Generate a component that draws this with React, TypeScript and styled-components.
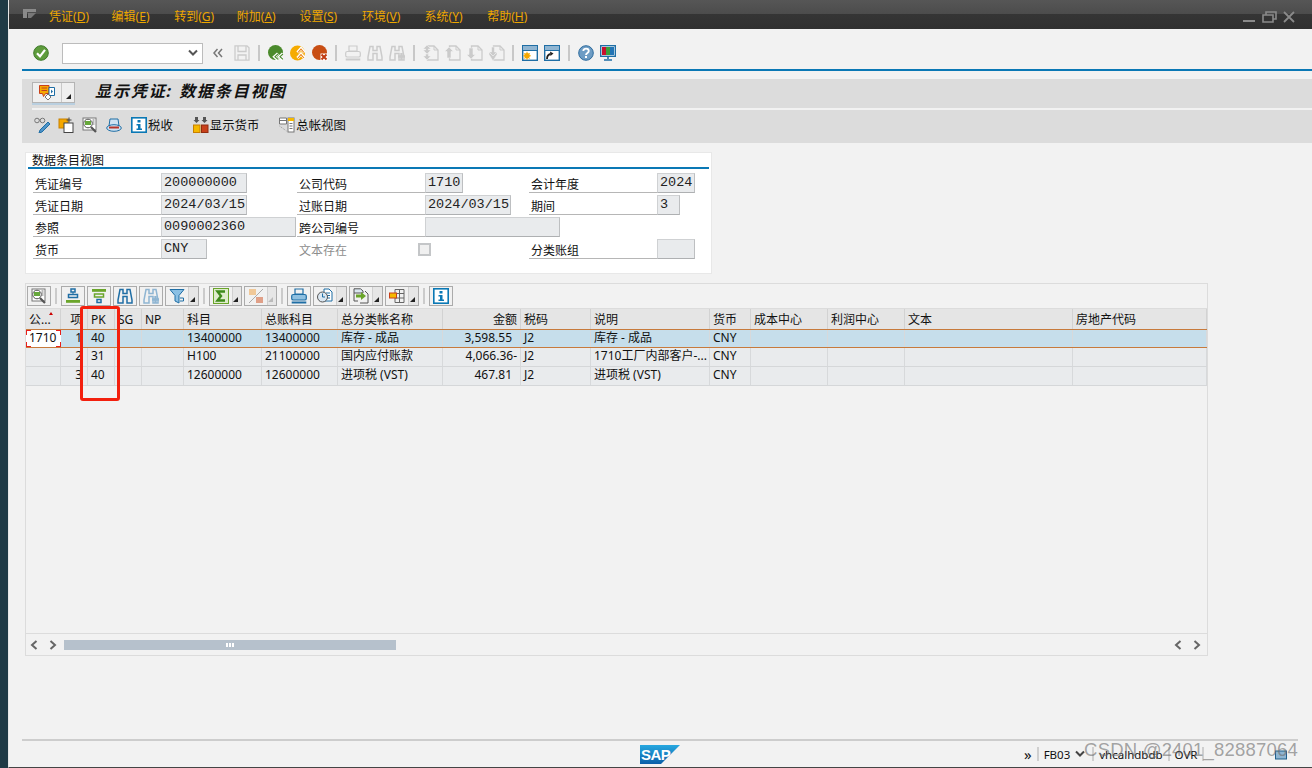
import React from 'react';
import styled, { createGlobalStyle } from 'styled-components';

const GlobalStyle = createGlobalStyle`
  html, body {
    margin: 0;
    width: 1312px;
    height: 768px;
    overflow: hidden;
    background: #f2f2f2;
    font-family: "Noto Sans", "Noto Sans CJK SC", sans-serif;
  }
  #root { width: 1312px; height: 768px; }
`;

const uiFont = `"Noto Sans", "Noto Sans CJK SC", sans-serif`;
const monoFont = `"Liberation Mono", "Noto Sans CJK SC", monospace`;
const GRID_COLS = '35px 27px 27px 27px 42px 78px 76px 105px 78px 70px 119px 41px 77px 77px 168px 1fr';

const Frame = styled.div`
  display: flex;
  width: 1312px;
  height: 768px;
`;

const LeftStrip = styled.div`
  width: 8px;
  background: #1f3a45;
`;

const Main = styled.div`
  position: relative;
  flex: 1;
  display: flex;
  flex-direction: column;
  box-sizing: border-box;
  background: #f2f2f2;
  border-left: 1px solid #e6e6e6;
  border-bottom: 1px solid #454545;
  overflow: hidden;
  color: #111;
`;

const TitleBar = styled.div`
  display: flex;
  align-items: center;
  height: 29px;
  flex-shrink: 0;
  padding: 0 17px 0 13px;
  background: linear-gradient(#565656 0, #4c4c4c 14px, #353535 14px, #303030 100%);
`;

const Menu = styled.div`
  display: flex;
  margin-left: 12px;
  flex: 1;
  padding-top: 3px;
`;

const MenuItem = styled.span`
  width: 62.6px;
  font-size: 12px;
  color: #eda600;
  white-space: nowrap;
  u { text-underline-offset: 1px; }
`;

const WinControls = styled.div`
  display: flex;
  align-items: center;
  gap: 6px;
  padding-top: 5px;
`;

const Content = styled.div`
  display: flex;
  flex-direction: column;
  flex: 1;
  padding-left: 13px;
`;

const SysToolbar = styled.div`
  display: flex;
  align-items: center;
  height: 40px;
  gap: 6px;
  padding: 8px 0 0 11px;
  box-sizing: border-box;
`;

const Combo = styled.div`
  display: flex;
  align-items: center;
  justify-content: flex-end;
  box-sizing: border-box;
  width: 141px;
  height: 21px;
  margin: 0 4px 0 7px;
  padding-right: 4px;
  background: #fff;
  border: 1px solid #bcbcbc;
`;

const Collapse = styled.span`
  margin-right: 5px;
`;

const ToolSep = styled.span`
  width: 2px;
  height: 16px;
  margin: 0 1.75px;
  background: #c8c8c8;
`;

const BlueRule = styled.div`
  height: 2px;
  background: #0a78b5;
  flex-shrink: 0;
  margin-bottom: 8px;
`;

const TitleRow = styled.div`
  display: flex;
  align-items: flex-start;
  height: 29px;
  box-sizing: border-box;
  padding: 3px 0 0 10px;
  background: #dcdcdc;
  flex-shrink: 0;
`;

const TitleRule = styled.div`
  height: 2px;
  padding-left: 10px;
  background: #dcdcdc;
  &::before {
    content: '';
    display: block;
    height: 2px;
    background: #f2f2f2;
  }
`;

const SplitBtn = styled.div`
  display: flex;
  box-sizing: border-box;
  width: 43px;
  height: 21px;
  background: #efefef;
  border: 1px solid #b4b4b4;
  box-shadow: 0 2px 0 #b9cfe0;
`;

const SplitMain = styled.div`
  display: flex;
  align-items: center;
  justify-content: center;
  width: 28px;
  border-right: 1px solid #c8c8c8;
`;

const SplitArrow = styled.div<{ $off?: boolean }>`
  flex: 1;
  position: relative;
  &::after {
    content: '';
    position: absolute;
    right: 3px;
    bottom: 3px;
    border-style: solid;
    border-width: 0 0 5px 5px;
    border-color: transparent transparent ${(p) => (p.$off ? '#bbb' : '#222')} transparent;
  }
`;

const ScreenTitle = styled.h1`
  margin: 0 0 0 20px;
  font-size: 16px;
  line-height: 18px;
  font-weight: 700;
  font-style: italic;
  letter-spacing: 1.9px;
  color: #111;
  font-family: ${uiFont};
`;

const AppToolbar = styled.div`
  display: flex;
  align-items: center;
  height: 33px;
  box-sizing: border-box;
  padding: 0 0 3px 12px;
  gap: 8px;
  background: #dcdcdc;
  flex-shrink: 0;
`;

const AppButton = styled.span<{ $gap?: number }>`
  display: inline-flex;
  align-items: center;
  gap: 1px;
  margin-left: ${(p) => p.$gap || 0}px;
  font-size: 12.4px;
  white-space: nowrap;
  color: #111;
`;

const Panel = styled.section`
  box-sizing: border-box;
  width: 687px;
  height: 122px;
  margin: 9px 0 0 3px;
  padding: 0 2px;
  background: #fff;
  border: 1px solid #e8e8e8;
`;

const PanelTitle = styled.div`
  box-sizing: border-box;
  height: 16px;
  padding-left: 4px;
  font-size: 12px;
  line-height: 15px;
  border-bottom: 2px solid #0a78b5;
`;

const FormRows = styled.div`
  display: flex;
  flex-direction: column;
  gap: 2px;
  margin-top: 4px;
  padding-left: 5px;
`;

const FormRow = styled.div`
  display: grid;
  grid-template-columns: 264px 232px 1fr;
  height: 20px;
`;

const FieldGroup = styled.div`
  display: flex;
  align-items: stretch;
`;

const Label = styled.label<{ $off?: boolean }>`
  box-sizing: border-box;
  flex-shrink: 0;
  width: 128px;
  padding: 4px 0 0 2px;
  font-size: 12px;
  line-height: 15px;
  color: ${(p) => (p.$off ? '#8d8d8d' : '#111')};
  border-bottom: 1px solid ${(p) => (p.$off ? 'transparent' : '#b6b6b6')};
  white-space: nowrap;
`;

const Field = styled.div<{ $w: number }>`
  box-sizing: border-box;
  flex-shrink: 0;
  width: ${(p) => p.$w}px;
  padding-left: 2px;
  background: #e9ebed;
  border: 1px solid #cfd1d3;
  border-bottom: 1px solid #aeb0b2;
  border-right-color: #bdbfc1;
  font-family: ${monoFont};
  font-size: 13.5px;
  line-height: 17px;
  color: #222;
  white-space: nowrap;
  overflow: hidden;
`;

const Check = styled.span`
  box-sizing: border-box;
  align-self: center;
  width: 13px;
  height: 13px;
  margin-left: -7px;
  background: #f0f0f0;
  border: 2px solid #c4c6c8;
`;

const TableBox = styled.section`
  position: relative;
  display: flex;
  flex-direction: column;
  box-sizing: border-box;
  width: 1183px;
  height: 373px;
  margin: 9px 0 0 3px;
  border: 1px solid #dcdcdc;
`;

const TableToolbar = styled.div`
  display: flex;
  align-items: center;
  gap: 2px;
  box-sizing: border-box;
  height: 25px;
  padding: 1px 0 1px 1px;
  border-bottom: 1px solid #dcdcdc;
`;

const TblBtn = styled.span<{ $w?: number }>`
  display: flex;
  box-sizing: border-box;
  width: ${(p) => p.$w || 24}px;
  height: 20px;
  background: #f1f1f1;
  border: 1px solid #ababab;
`;

const TblBtnIcon = styled.span`
  display: flex;
  align-items: center;
  justify-content: center;
  width: 22px;
  flex-shrink: 0;
`;

const TblBtnArrow = styled(SplitArrow)`
  border-left: 1px solid #d0d0d0;
  background: #e6e6e6;
`;

const TblSep = styled.span`
  width: 2px;
  height: 16px;
  margin: 0 2px;
  background: #cbcbcb;
`;

const GridHead = styled.div`
  display: grid;
  grid-template-columns: ${GRID_COLS};
  box-sizing: border-box;
  height: 21px;
  background: #e5e5e5;
  border-bottom: 1px solid #c77a3c;
`;

const GridRow = styled.div<{ $selected?: boolean }>`
  display: grid;
  grid-template-columns: ${GRID_COLS};
  box-sizing: border-box;
  height: ${(p) => (p.$selected ? 18 : 19)}px;
  background: ${(p) => (p.$selected ? '#c6deeb' : '#e9ebed')};
  border-bottom: 1px solid ${(p) => (p.$selected ? '#c77a3c' : '#d5d7d9')};
`;

const Cell = styled.div<{ $right?: boolean; $head?: boolean; $pad?: number }>`
  box-sizing: border-box;
  padding: 0 ${(p) => p.$pad ?? 3}px 0 3px;
  font-family: ${uiFont};
  font-size: 12px;
  text-align: ${(p) => (p.$right ? 'right' : 'left')};
  white-space: nowrap;
  overflow: hidden;
  color: #111;
  border-right: 1px solid ${(p) => (p.$head ? '#d2d2d2' : '#d7d9db')};
  line-height: ${(p) => (p.$head ? '22px' : '15px')};
`;

const FocusCell = styled(Cell)`
  background:
    linear-gradient(#e8201a, #e8201a) 0 0 / 5px 1px no-repeat,
    linear-gradient(#e8201a, #e8201a) 0 0 / 1px 5px no-repeat,
    linear-gradient(#e8201a, #e8201a) 100% 0 / 5px 1px no-repeat,
    linear-gradient(#e8201a, #e8201a) 100% 0 / 1px 5px no-repeat,
    linear-gradient(#e8201a, #e8201a) 0 100% / 5px 1px no-repeat,
    linear-gradient(#e8201a, #e8201a) 0 100% / 1px 5px no-repeat,
    linear-gradient(#e8201a, #e8201a) 100% 100% / 5px 1px no-repeat,
    linear-gradient(#e8201a, #e8201a) 100% 100% / 1px 5px no-repeat,
    #fff;
  border-right: 0;
`;

const SortMark = styled.span`
  position: absolute;
  top: 28px;
  left: 23px;
  border-style: solid;
  border-width: 0 2.5px 3px 2.5px;
  border-color: transparent transparent #c00 transparent;
`;

const Trail = styled.span`
  display: inline-block;
  width: 5px;
`;

const Spacer = styled.div`
  flex: 1;
`;

const ScrollBar = styled.div`
  display: flex;
  align-items: center;
  box-sizing: border-box;
  height: 22px;
  padding: 0 6px 0 4px;
  border-top: 1px solid #dcdcdc;
`;

const ScrollArrows = styled.div`
  display: flex;
  gap: 11px;
`;

const Thumb = styled.div`
  display: flex;
  align-items: center;
  justify-content: center;
  gap: 1px;
  width: 332px;
  height: 10px;
  margin: 0 auto 0 7px;
  background: #b6c1cc;
  i { width: 2px; height: 4px; background: #fff; }
`;

const Highlight = styled.div`
  position: absolute;
  left: 54px;
  top: 22px;
  box-sizing: border-box;
  width: 40px;
  height: 95px;
  border: 3px solid #f3200e;
  border-radius: 3px;
`;

const FooterRule = styled.div`
  width: 1276px;
  height: 2px;
  margin-top: auto;
  background: #cdcdcd;
  flex-shrink: 0;
`;

const Footer = styled.footer`
  display: flex;
  align-items: center;
  height: 26px;
  flex-shrink: 0;
`;

const SapLogo = styled.div`
  margin: 0 344px 0 618px;
`;

const StatusItem = styled.span<{ $ml?: number; $big?: boolean }>`
  margin-left: ${(p) => p.$ml || 0}px;
  font-size: ${(p) => (p.$big ? 15 : 11.5)}px;
  color: #111;
  white-space: nowrap;
`;

const StatusSep = styled.span<{ $ml?: number }>`
  width: 2px;
  height: 14px;
  margin-left: ${(p) => p.$ml || 0}px;
  background: #cfcfcf;
`;

const Watermark = styled.div`
  position: absolute;
  right: 14px;
  bottom: 6px;
  font-family: "Liberation Sans", sans-serif;
  font-size: 18.5px;
  letter-spacing: 0.2px;
  color: rgba(110, 110, 110, 0.62);
  white-space: nowrap;
`;

const Svg = styled.svg`
  display: block;
  flex-shrink: 0;
`;

type IcoProps = { c?: string };

const Ico: React.FC<{ w?: number; h?: number; children: React.ReactNode }> = ({ w = 16, h = 16, children }) => (
  <Svg width={w} height={h} viewBox={`0 0 ${w} ${h}`}>
    {children}
  </Svg>
);

const GREY = '#cbcbcb';

const OkIcon = () => (
  <Ico>
    <circle cx="8" cy="8" r="7.3" fill="#5e9c3c" stroke="#3f7a2a" />
    <path d="M4 8.200l3 3.200 5-6.600" fill="none" stroke="#fff" strokeWidth="2.200" />
  </Ico>
);
const BackIcon = () => (
  <Ico>
    <circle cx="7.500" cy="7.500" r="7.500" fill="#4b8a2c" />
    <path d="M10 8.500l-3.500 3.200 3.500 3.200M15 8.500l-3.500 3.200 3.500 3.200" fill="none" stroke="#fff" strokeWidth="3" />
    <path d="M10 9l-3 2.700 3 2.700M15 9l-3 2.700 3 2.700" fill="none" stroke="#4b8a2c" strokeWidth="1.100" />
  </Ico>
);
const ExitIcon = () => (
  <Ico>
    <circle cx="7.500" cy="8" r="7.500" fill="#f6ab00" />
    <path d="M7.500 7.500l3.500-4 3.500 4M7.500 13l3.500-4 3.500 4" fill="none" stroke="#fff" strokeWidth="3" />
    <path d="M8 7.500l3-3.400 3 3.400M8 13l3-3.400 3 3.400" fill="none" stroke="#e8801a" strokeWidth="1.100" />
  </Ico>
);
const CancelIcon = () => (
  <Ico>
    <circle cx="7.500" cy="7.500" r="7.500" fill="#c84e14" />
    <path d="M8.500 8.500h7v7h-7z" fill="#fff" />
    <path d="M9.500 9.500l5 5M14.500 9.500l-5 5" stroke="#c03a10" strokeWidth="2" />
  </Ico>
);
const SaveIcon = () => (
  <Ico>
    <path d="M1 .8h12l2 2v12.400H1z" fill="none" stroke={GREY} strokeWidth="1.300" />
    <path d="M4 1v5.500h8V1M4 15v-5h8v5" fill="none" stroke={GREY} strokeWidth="1.300" />
  </Ico>
);
const PrintIcon = ({ c = '#f2f2f2', d = GREY }: IcoProps & { d?: string }) => (
  <Ico>
    <path d="M4 1h8v5H4z" fill="none" stroke={d} strokeWidth="1.200" />
    <rect x=".7" y="6.500" width="14.600" height="5.500" rx="1.600" fill={c} stroke={d} strokeWidth="1.200" />
    <path d="M.7 14.500h14.600" stroke={d} strokeWidth="2" />
  </Ico>
);
const BinoIcon = ({ c = GREY, plus }: IcoProps & { plus?: boolean }) => (
  <Ico>
    <path d="M3 1.500h3v4h4v-4h3l2 10.500v3h-5V8.500H6V15H1v-3z" fill="none" stroke={c} strokeWidth="1.500" />
    {plus && <path d="M9 11.500h7M12.500 8v7" stroke={c} strokeWidth="2.400" />}
  </Ico>
);
const DocArrow = ({ up = 0, down = 0 }: { up?: number; down?: number }) => (
  <Ico>
    <path d="M4.500 1h6.500l4 4v10H4.500z" fill="none" stroke={GREY} strokeWidth="1.300" />
    <path d="M11 1v4h4" fill="none" stroke={GREY} />
    {up === 2 && <path d="M4 0l4 4H5.500v1H8l-4 4-4-4h2.500V4H0z" fill={GREY} stroke="#f2f2f2" strokeWidth=".6" />}
    {up === 1 && <path d="M4 2l4.500 4.500H6V13H2V6.500H-.5z" fill={GREY} stroke="#f2f2f2" strokeWidth=".6" />}
    {down === 1 && <path d="M2 3h4v6.500h2.500L4 14 -.5 9.500H2z" fill={GREY} stroke="#f2f2f2" strokeWidth=".6" />}
    {down === 2 && <path d="M0 7l4 3.500L8 7v2.500L4 16 0 9.500z" fill={GREY} stroke="#f2f2f2" strokeWidth=".6" />}
    {down === 2 && <path d="M2.500 2h3v5H8l-4 4-4-4h2.500z" fill={GREY} stroke="#f2f2f2" strokeWidth=".6" />}
    {up === 2 && <path d="M2.500 9h3v2H8l-4 4-4-4h2.500z" fill={GREY} stroke="#f2f2f2" strokeWidth=".6" />}
  </Ico>
);
const NewModeIcon = () => (
  <Ico>
    <rect x=".7" y=".7" width="14.600" height="14.600" fill="#fff" stroke="#1f6ea5" strokeWidth="1.400" />
    <rect x="1" y="1" width="14" height="4" fill="#8fb5d2" />
    <path d="M1 5.500h14" stroke="#1f6ea5" />
    <circle cx="5" cy="10.800" r="2.800" fill="#f5a800" />
    <path d="M5 6.800v8M1.200 10.800h7.600M2.300 8l5.400 5.600M7.700 8l-5.400 5.600" stroke="#f5a800" />
  </Ico>
);
const ShortcutIcon = () => (
  <Ico>
    <rect x=".7" y=".7" width="14.600" height="14.600" fill="#fff" stroke="#1f6ea5" strokeWidth="1.400" />
    <rect x="1" y="1" width="14" height="4" fill="#8fb5d2" />
    <path d="M1 5.500h14" stroke="#1f6ea5" />
    <path d="M3 14c0-3 1.200-4.500 3.500-5" fill="none" stroke="#222" strokeWidth="1.800" />
    <path d="M6 6.500l3.500 2-3 2.500z" fill="#222" />
  </Ico>
);
const HelpIcon = () => (
  <Ico>
    <circle cx="8" cy="8" r="7.300" fill="#6d9cc4" stroke="#2e6c9e" />
    <path d="M5.300 6c0-3.300 5.500-3.300 5.500 0 0 2-2.800 2-2.800 4" fill="none" stroke="#fff" strokeWidth="1.800" />
    <rect x="7" y="11" width="2" height="2" fill="#fff" />
  </Ico>
);
const MonitorIcon = () => (
  <Ico>
    <rect x=".7" y=".7" width="14.600" height="10.600" fill="#fff" stroke="#1f6ea5" strokeWidth="1.400" />
    <rect x="2" y="2" width="4" height="8" fill="#c8102e" />
    <rect x="6" y="2" width="4" height="8" fill="#3aa03a" />
    <rect x="10" y="2" width="4" height="8" fill="#2274b5" />
    <path d="M8 12v2M4 15h8" stroke="#1f6ea5" strokeWidth="1.600" />
  </Ico>
);
const DisplayChangeIcon = () => (
  <Ico>
    <path d="M.5 .5h9.500v8H6.500l-2 3-1-3h-3z" fill="#f5a800" stroke="#c8401a" />
    <path d="M2.500 3h5.500M2.500 5.500h5.500" stroke="#c8401a" />
    <path d="M10 2.500h5.500v8H10z" fill="#fff" stroke="#1f6ea5" />
    <path d="M12 4.500l2 2-2 2z" fill="#1f6ea5" />
    <path d="M6 12l3-3 3 3-3 3z" fill="#fff" stroke="#777" />
  </Ico>
);
const GlassPenIcon = () => (
  <Ico>
    <circle cx="3" cy="3.500" r="2.300" fill="none" stroke="#777" />
    <circle cx="8.500" cy="3.500" r="2.300" fill="none" stroke="#777" />
    <path d="M5.300 3h1" stroke="#777" />
    <path d="M14 5l2 2-8 8-3 1 1-3z" fill="#4f94c8" stroke="#1f6ea5" />
  </Ico>
);
const CopyDocIcon = () => (
  <Ico>
    <rect x="1" y="2" width="9" height="9" fill="#f5a800" stroke="#c88000" />
    <rect x="6" y="6" width="9" height="9.500" fill="#fff" stroke="#444" />
    <path d="M11 .5v5M8.500 3h5" stroke="#444" />
  </Ico>
);
const DocSearchIcon = () => (
  <Ico>
    <rect x="1" y="1" width="13" height="12" fill="#fff" stroke="#777" />
    <path d="M10.500 3h2M10.500 5h2M10.500 7h2" stroke="#777" />
    <circle cx="6" cy="6.500" r="4.300" fill="#fff" stroke="#555" />
    <rect x="3" y="4" width="6" height="4" fill="#67a83c" />
    <path d="M9 10l5 5" stroke="#555" strokeWidth="2.200" />
  </Ico>
);
const HatIcon = () => (
  <Ico>
    <path d="M4 2h8l1 7H3z" fill="#cfe3f2" stroke="#1f6ea5" />
    <ellipse cx="8" cy="11" rx="7.300" ry="3.300" fill="#cfe3f2" stroke="#1f6ea5" />
    <path d="M3 9.500h10v2H3z" fill="#b5342a" />
  </Ico>
);
const InfoIcon = () => (
  <Ico>
    <rect x=".8" y=".8" width="14.400" height="14.400" fill="#fff" stroke="#0a78b5" strokeWidth="1.600" />
    <rect x="6.500" y="3" width="3" height="2.500" fill="#0a78b5" />
    <path d="M5.500 7h4v4.500h1.500V13H5.500v-1.500H7V8.500H5.500z" fill="#0a78b5" />
  </Ico>
);
const CurrencyIcon = () => (
  <Ico>
    <path d="M2 0h3v3h1.500L3.500 6 .5 3H2zM10 0h3v3h1.500l-3 3-3-3H10z" fill="#555" />
    <rect x=".5" y="8" width="6.500" height="7.500" fill="#f5b800" stroke="#c88000" />
    <rect x="8.500" y="8" width="6.500" height="7.500" fill="#c8401a" stroke="#8f2d10" />
  </Ico>
);
const LedgerIcon = () => (
  <Ico>
    <path d="M.5 1h7v6h-7zM.5 3.500h7" fill="#fff" stroke="#777" />
    <path d="M.5 9l7 5" stroke="#999" strokeDasharray="1 1" />
    <rect x="9" y="1" width="6" height="14" fill="#fff" stroke="#777" />
    <path d="M9 1h6v3H9z" fill="#f5b800" />
    <path d="M10.500 6.500h3M10.500 9h3M10.500 11.500h3" stroke="#777" />
  </Ico>
);
const BarsIcon = ({ v }: { v: 'asc' | 'desc' }) => (
  <Ico>
    {v === 'asc' ? (
      <>
        <rect x="6" y="1" width="4" height="3" fill="none" stroke="#1f6ea5" strokeWidth="1.500" />
        <path d="M8 4v2" stroke="#1f6ea5" />
        <rect x="3.500" y="6.500" width="9" height="3" fill="none" stroke="#1f6ea5" strokeWidth="1.500" />
        <rect x="1" y="12" width="14" height="2.800" fill="#6aa52a" />
      </>
    ) : (
      <>
        <rect x="1" y="1" width="14" height="2.800" fill="#6aa52a" />
        <rect x="3.500" y="6" width="9" height="3" fill="none" stroke="#6aa52a" strokeWidth="1.500" />
        <rect x="6" y="11.500" width="4" height="3" fill="none" stroke="#1f6ea5" strokeWidth="1.500" />
      </>
    )}
  </Ico>
);
const FunnelIcon = () => (
  <Ico>
    <path d="M1 1.500h14L10 7.500V15l-4-2V7.500z" fill="#8bc0e4" stroke="#1f6ea5" />
    <path d="M11 10h3.500v3H11" fill="none" stroke="#1f6ea5" />
  </Ico>
);
const SigmaIcon = ({ off }: { off?: boolean }) =>
  off ? (
    <Ico>
      <rect x="1" y="1" width="7" height="6" fill="#f0c898" />
      <rect x="8" y="9" width="7" height="6" fill="#e0a088" />
      <path d="M15 1L1 15" stroke="#aaa" />
    </Ico>
  ) : (
    <Ico>
      <rect x=".5" y=".5" width="15" height="15" fill="#dfeccc" stroke="#6aa52a" />
      <path d="M12 3.500H4.500L8 8l-3.500 4.500H12" fill="none" stroke="#3e8a1a" strokeWidth="2.400" />
    </Ico>
  );
const ClockDocIcon = () => (
  <Ico>
    <path d="M7 1h5l3 3v9H7z" fill="#fff" stroke="#1f6ea5" />
    <path d="M9 5h4M9 7.500h4M9 10h4" stroke="#1f6ea5" />
    <circle cx="5.500" cy="9" r="5" fill="#dbe7f1" stroke="#555" />
    <path d="M5.500 5.500V9H8" fill="none" stroke="#1f6ea5" />
  </Ico>
);
const ExportIcon = () => (
  <Ico>
    <path d="M1 .8h6.500L10 3v2H1z" fill="#dbe7f1" stroke="#555" />
    <path d="M1 5v8h4M7 15h8V6l-3-3" fill="none" stroke="#555" />
    <path d="M3 6.500h5V4l5 4-5 4V9.500H3z" fill="#6aa52a" />
  </Ico>
);
const LayoutIcon = () => (
  <Ico>
    <path d="M6 1.500h9v13H6zM6 5.500h9M6 10h9M10.500 1.500v13" fill="none" stroke="#666" />
    <rect x=".5" y="5" width="7" height="5" fill="#f5b800" stroke="#c8401a" />
  </Ico>
);
const ChevL = () => (
  <Ico w={8} h={10}>
    <path d="M6.500 1L2 5l4.500 4" fill="none" stroke="#666" strokeWidth="2" />
  </Ico>
);
const ChevR = () => (
  <Ico w={8} h={10}>
    <path d="M1.500 1L6 5 1.500 9" fill="none" stroke="#666" strokeWidth="2" />
  </Ico>
);
const ChevDown = ({ c = '#555' }: IcoProps) => (
  <Ico w={10} h={8}>
    <path d="M1 1.500l4 4 4-4" fill="none" stroke={c} strokeWidth="2" />
  </Ico>
);
const DoubleLeft = () => (
  <Ico w={10} h={10}>
    <path d="M4.500 1L1 5l3.500 4M9 1L5.500 5 9 9" fill="none" stroke="#777" strokeWidth="1.500" />
  </Ico>
);
const WinMin = () => (
  <Ico w={13} h={12}>
    <path d="M0 10h12" stroke="#8a8a8a" strokeWidth="2" />
  </Ico>
);
const WinRestore = () => (
  <Ico w={15} h={12}>
    <path d="M1 4h10v7H1zM4 4V1h10v7h-3" fill="none" stroke="#8a8a8a" strokeWidth="1.600" />
  </Ico>
);
const WinClose = () => (
  <Ico w={12} h={12}>
    <path d="M1 1l10 10M11 1L1 11" stroke="#8a8a8a" strokeWidth="1.800" />
  </Ico>
);

const menus: [string, string][] = [
  ['凭证', 'D'],
  ['编辑', 'E'],
  ['转到', 'G'],
  ['附加', 'A'],
  ['设置', 'S'],
  ['环境', 'V'],
  ['系统', 'Y'],
  ['帮助', 'H'],
];

const headers = ['公...', '项', 'PK', 'SG', 'NP', '科目', '总账科目', '总分类帐名称', '金额', '税码', '说明', '货币', '成本中心', '利润中心', '文本', '房地产代码'];

const rows = [
  ['1710', '1', '40', '', '', '13400000', '13400000', '库存 - 成品', '3,598.55', 'J2', '库存 - 成品', 'CNY', '', '', '', ''],
  ['', '2', '31', '', '', 'H100', '21100000', '国内应付账款', '4,066.36-', 'J2', '1710工厂内部客户-...', 'CNY', '', '', '', ''],
  ['', '3', '40', '', '', '12600000', '12600000', '进项税 (VST)', '467.81', 'J2', '进项税 (VST)', 'CNY', '', '', '', ''],
];

const renderCell = (v: string, i: number, rowIdx: number) => {
  if (i === 0 && rowIdx === 0) return <FocusCell key={i}>{v}</FocusCell>;
  if (i === 8) {
    return (
      <Cell key={i} $right>
        {v}
        {!v.endsWith('-') && <Trail />}
      </Cell>
    );
  }
  return (
    <Cell key={i} $right={i === 1} $pad={i === 1 ? 5 : 3}>
      {v}
    </Cell>
  );
};

const App: React.FC = () => (
  <>
    <GlobalStyle />
    <Frame>
      <LeftStrip />
      <Main>
        <TitleBar>
          <Ico w={15} h={14}>
            <path d="M1 1h13v3H5v6H1z" fill="#8a8a8a" />
            <path d="M6 5h8L9 10H6z" fill="#777" />
          </Ico>
          <Menu>
            {menus.map(([name, key]) => (
              <MenuItem key={key}>
                {name}(<u>{key}</u>)
              </MenuItem>
            ))}
          </Menu>
          <WinControls>
            <WinMin />
            <WinRestore />
            <WinClose />
          </WinControls>
        </TitleBar>
        <Content>
          <SysToolbar>
            <OkIcon />
            <Combo>
              <ChevDown />
            </Combo>
            <Collapse>
              <DoubleLeft />
            </Collapse>
            <SaveIcon />
            <ToolSep />
            <BackIcon />
            <ExitIcon />
            <CancelIcon />
            <ToolSep />
            <PrintIcon />
            <BinoIcon />
            <BinoIcon plus />
            <ToolSep />
            <DocArrow up={2} />
            <DocArrow up={1} />
            <DocArrow down={1} />
            <DocArrow down={2} />
            <ToolSep />
            <NewModeIcon />
            <ShortcutIcon />
            <ToolSep />
            <HelpIcon />
            <MonitorIcon />
          </SysToolbar>
          <BlueRule />
          <TitleRow>
            <SplitBtn>
              <SplitMain>
                <DisplayChangeIcon />
              </SplitMain>
              <SplitArrow />
            </SplitBtn>
            <ScreenTitle>显示凭证: 数据条目视图</ScreenTitle>
          </TitleRow>
          <TitleRule />
          <AppToolbar>
            <GlassPenIcon />
            <CopyDocIcon />
            <DocSearchIcon />
            <HatIcon />
            <AppButton $gap={1}>
              <InfoIcon />
              <span>税收</span>
            </AppButton>
            <AppButton $gap={12}>
              <CurrencyIcon />
              <span>显示货币</span>
            </AppButton>
            <AppButton $gap={12}>
              <LedgerIcon />
              <span>总帐视图</span>
            </AppButton>
          </AppToolbar>
          <Panel>
            <PanelTitle>数据条目视图</PanelTitle>
            <FormRows>
              <FormRow>
                <FieldGroup>
                  <Label>凭证编号</Label>
                  <Field $w={86}>200000000</Field>
                </FieldGroup>
                <FieldGroup>
                  <Label>公司代码</Label>
                  <Field $w={38}>1710</Field>
                </FieldGroup>
                <FieldGroup>
                  <Label>会计年度</Label>
                  <Field $w={38}>2024</Field>
                </FieldGroup>
              </FormRow>
              <FormRow>
                <FieldGroup>
                  <Label>凭证日期</Label>
                  <Field $w={86}>2024/03/15</Field>
                </FieldGroup>
                <FieldGroup>
                  <Label>过账日期</Label>
                  <Field $w={86}>2024/03/15</Field>
                </FieldGroup>
                <FieldGroup>
                  <Label>期间</Label>
                  <Field $w={23}>3</Field>
                </FieldGroup>
              </FormRow>
              <FormRow>
                <FieldGroup>
                  <Label>参照</Label>
                  <Field $w={135}>0090002360</Field>
                </FieldGroup>
                <FieldGroup>
                  <Label>跨公司编号</Label>
                  <Field $w={135} />
                </FieldGroup>
                <FieldGroup />
              </FormRow>
              <FormRow>
                <FieldGroup>
                  <Label>货币</Label>
                  <Field $w={46}>CNY</Field>
                </FieldGroup>
                <FieldGroup>
                  <Label $off>文本存在</Label>
                  <Check />
                </FieldGroup>
                <FieldGroup>
                  <Label>分类账组</Label>
                  <Field $w={38} />
                </FieldGroup>
              </FormRow>
            </FormRows>
          </Panel>
          <TableBox>
            <TableToolbar>
              <TblBtn><TblBtnIcon><DocSearchIcon /></TblBtnIcon></TblBtn>
              <TblSep />
              <TblBtn><TblBtnIcon><BarsIcon v="asc" /></TblBtnIcon></TblBtn>
              <TblBtn><TblBtnIcon><BarsIcon v="desc" /></TblBtnIcon></TblBtn>
              <TblBtn><TblBtnIcon><BinoIcon c="#1f6ea5" /></TblBtnIcon></TblBtn>
              <TblBtn><TblBtnIcon><BinoIcon c="#8fb5d2" plus /></TblBtnIcon></TblBtn>
              <TblBtn $w={34}><TblBtnIcon><FunnelIcon /></TblBtnIcon><TblBtnArrow /></TblBtn>
              <TblSep />
              <TblBtn $w={33}><TblBtnIcon><SigmaIcon /></TblBtnIcon><TblBtnArrow /></TblBtn>
              <TblBtn $w={33}><TblBtnIcon><SigmaIcon off /></TblBtnIcon><TblBtnArrow $off /></TblBtn>
              <TblSep />
              <TblBtn><TblBtnIcon><PrintIcon c="#8fc0e0" d="#1f6ea5" /></TblBtnIcon></TblBtn>
              <TblBtn $w={34}><TblBtnIcon><ClockDocIcon /></TblBtnIcon><TblBtnArrow /></TblBtn>
              <TblBtn $w={34}><TblBtnIcon><ExportIcon /></TblBtnIcon><TblBtnArrow /></TblBtn>
              <TblBtn $w={34}><TblBtnIcon><LayoutIcon /></TblBtnIcon><TblBtnArrow /></TblBtn>
              <TblSep />
              <TblBtn><TblBtnIcon><InfoIcon /></TblBtnIcon></TblBtn>
            </TableToolbar>
            <GridHead>
              {headers.map((h, i) => (
                <Cell key={h} $head $right={i === 8}>
                  {i === 1 ? <>&nbsp;&nbsp;{h}</> : h}
                </Cell>
              ))}
            </GridHead>
            <SortMark />
            {rows.map((r, rowIdx) => (
              <GridRow key={rowIdx} $selected={rowIdx === 0}>
                {r.map((v, i) => renderCell(v, i, rowIdx))}
              </GridRow>
            ))}
            <Spacer />
            <ScrollBar>
              <ScrollArrows>
                <ChevL />
                <ChevR />
              </ScrollArrows>
              <Thumb>
                <i />
                <i />
                <i />
              </Thumb>
              <ScrollArrows>
                <ChevL />
                <ChevR />
              </ScrollArrows>
            </ScrollBar>
            <Highlight />
          </TableBox>
          <FooterRule />
          <Footer>
            <SapLogo>
              <Svg width="40" height="19" viewBox="0 0 40 19">
                <defs>
                  <linearGradient id="sapBlue" x1="0" y1="0" x2="0" y2="1">
                    <stop offset="0" stopColor="#27a8e0" />
                    <stop offset="1" stopColor="#0a5fa8" />
                  </linearGradient>
                </defs>
                <path d="M0 0h40L21 19H0z" fill="url(#sapBlue)" />
                <text x="1" y="14.500" fontFamily="Liberation Sans, sans-serif" fontSize="15" fontWeight="700" fill="#fff" letterSpacing="-.5">
                  SAP
                </text>
              </Svg>
            </SapLogo>
            <StatusItem $big>»</StatusItem>
            <StatusSep $ml={5} />
            <StatusItem $ml={5}>FB03</StatusItem>
            <StatusItem $ml={5}>
              <ChevDown c="#444" />
            </StatusItem>
            <StatusSep $ml={7} />
            <StatusItem $ml={5}>vhcalhdbdb</StatusItem>
            <StatusSep $ml={5} />
            <StatusItem $ml={5}>OVR</StatusItem>
            <StatusSep $ml={5} />
            <StatusItem $ml={71}>
              <Ico w={13} h={12}>
                <rect x=".5" y="3" width="11" height="8" fill="#8fb5d2" stroke="#1f5f8a" />
              </Ico>
            </StatusItem>
          </Footer>
          <Watermark>CSDN @2401_82887064</Watermark>
        </Content>
      </Main>
    </Frame>
  </>
);

export default App;
